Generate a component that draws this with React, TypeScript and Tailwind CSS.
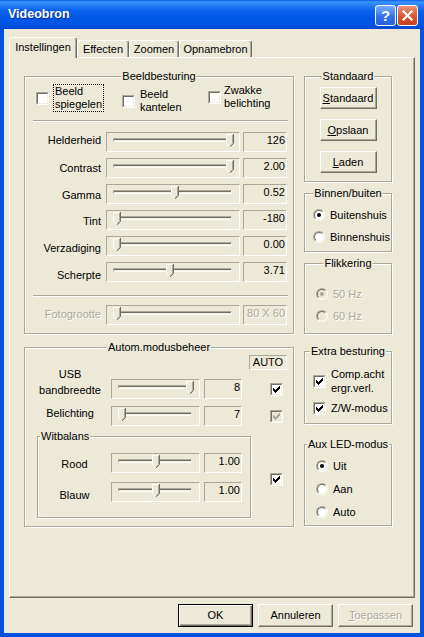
import type { ReactNode } from "react";

// classic 3D colours on the XP beige face
const dis = "text-[#ACA899] [text-shadow:1px_1px_0_#fff]";

const CHECK = [
  [6, 0, 1],
  [5, 1, 2],
  [0, 2, 1],
  [4, 2, 3],
  [0, 3, 2],
  [3, 3, 3],
  [0, 4, 5],
  [1, 5, 3],
  [2, 6, 1],
];

function Check({ checked = false, disabled = false }: { checked?: boolean; disabled?: boolean }) {
  return (
    <span className="flex w-[13px] h-[13px] shrink-0 border border-t-[#ACA899] border-l-[#ACA899] border-r-white border-b-white">
      <span
        className={`flex w-full h-full items-center justify-center border border-t-[#716F64] border-l-[#716F64] border-r-[#F1EFE2] border-b-[#F1EFE2] ${
          disabled ? "bg-[#ECE9D8]" : "bg-white"
        }`}
      >
        {checked && (
          <svg width="7" height="7" viewBox="0 0 7 7" shapeRendering="crispEdges">
            {CHECK.map(([x, y, w]) => (
              <rect key={`${x}-${y}`} x={x} y={y} width={w} height={1} fill={disabled ? "#ACA899" : "#000"} />
            ))}
          </svg>
        )}
      </span>
    </span>
  );
}

function Radio({ checked = false, disabled = false }: { checked?: boolean; disabled?: boolean }) {
  return (
    <span className="flex w-[12px] h-[12px] shrink-0 rounded-full border border-t-[#ACA899] border-l-[#ACA899] border-r-white border-b-white">
      <span
        className={`flex w-full h-full items-center justify-center rounded-full border border-t-[#716F64] border-l-[#716F64] border-r-[#F1EFE2] border-b-[#F1EFE2] ${
          disabled ? "bg-[#ECE9D8]" : "bg-white"
        }`}
      >
        {checked && <span className={`w-[4px] h-[4px] rounded-full ${disabled ? "bg-[#ACA899]" : "bg-black"}`} />}
      </span>
    </span>
  );
}

function GroupBox({
  title,
  left = false,
  className = "",
  children,
}: {
  title: string;
  left?: boolean;
  className?: string;
  children?: ReactNode;
}) {
  return (
    <div className={`relative shrink-0 border border-[#ACA899] shadow-[inset_1px_1px_0_#fff,1px_1px_0_#fff] ${className}`}>
      <span
        className={`absolute -top-[8px] whitespace-nowrap bg-[#ECE9D8] px-[1px] leading-[14px] ${
          left ? "left-[2px]" : "left-1/2 -translate-x-1/2"
        }`}
      >
        {title}
      </span>
      {children}
    </div>
  );
}

function Separator({ className = "" }: { className?: string }) {
  return <div className={`h-[2px] border-t border-t-[#ACA899] border-b border-b-white ${className}`} />;
}

function Thumb() {
  return (
    <svg width="8" height="13" viewBox="0 0 8 13">
      <path d="M0 0H7V9L4 12H3L0 9Z" fill="#ECE9D8" />
      <path d="M0.5 9.5V0.5H6.5" stroke="#fff" fill="none" />
      <path d="M0.5 9.5L3.5 12.5" stroke="#fff" fill="none" />
      <path d="M6.5 1V9.3L3.6 12.2" stroke="#ACA899" fill="none" />
      <path d="M7.5 0V9.5L4.2 12.8" stroke="#716F64" fill="none" />
    </svg>
  );
}

function Slider({ pos, wide = false }: { pos: number; wide?: boolean }) {
  const w = wide ? 134 : 89;
  const left = Math.round(11 + pos * (w - 21) - 4);
  return (
    <div
      className={`relative shrink-0 h-[20px] border border-t-[#ACA899] border-l-[#ACA899] border-r-white border-b-white ${
        wide ? "w-[134px]" : "w-[89px]"
      }`}
    >
      <div className="absolute left-[6px] right-[7px] top-[5px] h-[4px] border border-t-[#ACA899] border-l-[#ACA899] border-r-white border-b-white">
        <div className="h-full border-t border-t-[#716F64] border-b border-b-[#F1EFE2]" />
      </div>
      <div className="absolute top-[1px] flex" style={{ left: left - 1 }}>
        <Thumb />
      </div>
    </div>
  );
}

function Value({ children, className = "", disabled = false }: { children: ReactNode; className?: string; disabled?: boolean }) {
  return (
    <div
      className={`shrink-0 h-[20px] border border-t-[#ACA899] border-l-[#ACA899] border-r-white border-b-white text-right pr-[1px] pt-[1px] leading-[13px] whitespace-nowrap ${
        disabled ? dis : ""
      } ${className}`}
    >
      {children}
    </div>
  );
}

function Btn({
  children,
  className = "",
  isDefault = false,
  disabled = false,
}: {
  children: ReactNode;
  className?: string;
  isDefault?: boolean;
  disabled?: boolean;
}) {
  return (
    <div
      className={`flex shrink-0 items-center justify-center bg-[#ECE9D8] border ${
        isDefault
          ? "border-black shadow-[inset_1px_1px_0_#fff,inset_-1px_-1px_0_#716F64,inset_-2px_-2px_0_#ACA899]"
          : "border-t-white border-l-white border-r-[#716F64] border-b-[#716F64] shadow-[inset_-1px_-1px_0_#ACA899]"
      } ${disabled ? dis : ""} ${className}`}
    >
      {children}
    </div>
  );
}

function Tab({ children, selected = false, className = "" }: { children: ReactNode; selected?: boolean; className?: string }) {
  return (
    <div
      className={`flex shrink-0 items-center justify-center rounded-t-[3px] bg-[#ECE9D8] border-t border-l border-r border-t-white border-l-white border-r-[#716F64] shadow-[inset_-1px_0_0_#ACA899] ${
        selected ? "relative z-10 h-[21px] -mb-[1px] pb-[2px]" : "h-[17px]"
      } ${className}`}
    >
      {children}
    </div>
  );
}

function TitleBar() {
  return (
    <div className="h-[29px] shrink-0 flex items-center pl-[8px] pr-[6px] bg-[linear-gradient(to_bottom,#0A5FE8_0%,#3D95FF_7%,#2A82F7_17%,#0B63EC_35%,#0058E6_60%,#0055E3_85%,#0046D2_100%)]">
      <span className="flex-1 text-white font-bold text-[12.5px] [text-shadow:1px_1px_0_#0B2F8E]">Videobron</span>
      <div className="mt-[2px] flex gap-[1px]">
        <div className="w-[21px] h-[21px] rounded-[3px] border border-white bg-[linear-gradient(to_bottom,#79AEFA,#3471E8_55%,#2A5FDC)] flex items-center justify-center text-white font-bold text-[15px] leading-none">
          ?
        </div>
        <div className="w-[21px] h-[21px] rounded-[3px] border border-white bg-[linear-gradient(to_bottom,#EC9274,#D9552F_55%,#C4411F)] flex items-center justify-center">
          <svg width="11" height="11" viewBox="0 0 11 11">
            <path d="M1.5 1.5L9.5 9.5M9.5 1.5L1.5 9.5" stroke="#fff" strokeWidth="2.2" strokeLinecap="square" />
          </svg>
        </div>
      </div>
    </div>
  );
}

const beeldRows = [
  { label: "Helderheid", value: "126", pos: 1, dy: "pt-[2px]" },
  { label: "Contrast", value: "2.00", pos: 1, dy: "pt-[4px]" },
  { label: "Gamma", value: "0.52", pos: 0.51, dy: "pt-[5px]" },
  { label: "Tint", value: "-180", pos: 0, dy: "pt-[5px]" },
  { label: "Verzadiging", value: "0.00", pos: 0, dy: "pt-[6px]" },
  { label: "Scherpte", value: "3.71", pos: 0.47, dy: "pt-[7px]" },
];

function Beeldbesturing() {
  return (
    <GroupBox title="Beeldbesturing" className="h-[258px]">
      <div className="flex h-[35px] pl-[11px] pt-[7px]">
        <div className="flex w-[86px] items-center self-start">
          <Check />
          <span className="ml-[4px] border border-dotted border-black px-[1px] leading-[13px]">
            Beeld
            <br />
            spiegelen
          </span>
        </div>
        <div className="flex w-[86px] items-center self-start mt-[4px]">
          <Check />
          <span className="ml-[5px] leading-[13px]">
            Beeld
            <br />
            kantelen
          </span>
        </div>
        <div className="flex items-center self-start">
          <Check />
          <span className="ml-[3px] leading-[13px]">
            Zwakke
            <br />
            belichting
          </span>
        </div>
      </div>
      <Separator className="mt-[8px] ml-[8px] mr-[5px]" />
      <div className="mt-[10px] flex flex-col gap-[6px]">
        {beeldRows.map((r) => (
          <div key={r.label} className="flex h-[20px] items-start">
            <div className={`w-[76px] text-right leading-[13px] ${r.dy}`}>{r.label}</div>
            <div className="ml-[5px]">
              <Slider wide pos={r.pos} />
            </div>
            <Value className="ml-[3px] w-[44px]">{r.value}</Value>
          </div>
        ))}
      </div>
      <Separator className="mt-[13px] ml-[8px] mr-[5px]" />
      <div className="mt-[8px] flex h-[20px] items-start">
        <div className={`w-[76px] text-right leading-[13px] pt-[3px] ${dis}`}>Fotogrootte</div>
        <div className="ml-[5px]">
          <Slider wide pos={0} />
        </div>
        <Value disabled className="ml-[3px] w-[44px]">
          80 X 60
        </Value>
      </div>
    </GroupBox>
  );
}

function Automodus() {
  return (
    <GroupBox title="Autom.modusbeheer" className="mt-[13px] h-[180px]">
      <div className="pt-[7px]">
        <div className="ml-[224px] w-[38px] h-[15px] border border-t-[#ACA899] border-l-[#ACA899] border-r-white border-b-white text-center leading-[13px]">
          AUTO
        </div>
      </div>
      <div className="mt-[9px] flex h-[20px] items-center">
        <div className="w-[86px] shrink-0 pl-[4px] text-center leading-[16px] mb-[15px]">
          USB
          <br />
          bandbreedte
        </div>
        <Slider pos={1} />
        <Value className="ml-[4px] w-[38px]">8</Value>
        <div className="ml-[28px]">
          <Check checked />
        </div>
      </div>
      <div className="mt-[7px] flex h-[20px] items-center">
        <div className="w-[86px] shrink-0 pl-[4px] text-center leading-[13px] mb-[6px]">Belichting</div>
        <Slider pos={0} />
        <Value className="ml-[4px] w-[38px]">7</Value>
        <div className="ml-[28px]">
          <Check checked disabled />
        </div>
      </div>
      <div className="mt-[10px] flex items-center">
        <GroupBox title="Witbalans" left className="ml-[12px] w-[214px] h-[82px]">
          <div className="pt-[16px] flex flex-col gap-[9px]">
            <div className="flex h-[20px] items-start">
              <div className="w-[73px] shrink-0 text-center leading-[13px] pt-[5px]">Rood</div>
              <Slider pos={0.5} />
              <Value className="ml-[4px] w-[38px]">1.00</Value>
            </div>
            <div className="flex h-[20px] items-start">
              <div className="w-[73px] shrink-0 text-center leading-[13px] pt-[7px]">Blauw</div>
              <Slider pos={0.5} />
              <Value className="ml-[4px] w-[38px]">1.00</Value>
            </div>
          </div>
        </GroupBox>
        <div className="ml-[19px] mt-[4px]">
          <Check checked />
        </div>
      </div>
    </GroupBox>
  );
}

function RadioRow({ label, checked = false, disabled = false }: { label: string; checked?: boolean; disabled?: boolean }) {
  return (
    <div className="flex h-[16px] items-center">
      <Radio checked={checked} disabled={disabled} />
      <span className={`ml-[5px] ${disabled ? dis : ""}`}>{label}</span>
    </div>
  );
}

function RightColumn() {
  return (
    <div className="flex w-[88px] shrink-0 flex-col">
      <GroupBox title="Standaard" className="h-[106px]">
        <div className="flex flex-col items-center gap-[10px] pt-[10px]">
          <Btn className="w-[57px] h-[22px]">
            <span>
              <u>S</u>tandaard
            </span>
          </Btn>
          <Btn className="w-[57px] h-[22px]">
            <span>
              <u>O</u>pslaan
            </span>
          </Btn>
          <Btn className="w-[57px] h-[22px]">
            <span>
              <u>L</u>aden
            </span>
          </Btn>
        </div>
      </GroupBox>
      <GroupBox title="Binnen/buiten" className="mt-[11px] h-[59px]">
        <div className="flex flex-col gap-[6px] pt-[13px] pl-[8px]">
          <RadioRow label="Buitenshuis" checked />
          <RadioRow label="Binnenshuis" />
        </div>
      </GroupBox>
      <GroupBox title="Flikkering" className="mt-[11px] h-[71px]">
        <div className="flex flex-col gap-[6px] pt-[22px] pl-[11px]">
          <RadioRow label="50 Hz" checked disabled />
          <RadioRow label="60 Hz" disabled />
        </div>
      </GroupBox>
      <GroupBox title="Extra besturing" className="mt-[17px] h-[73px]">
        <div className="pt-[15px] pl-[8px]">
          <div className="flex items-center">
            <Check checked />
            <span className="ml-[5px] leading-[14px]">
              Comp.acht
              <br />
              ergr.verl.
            </span>
          </div>
          <div className="mt-[5px] flex h-[16px] items-center">
            <Check checked />
            <span className="ml-[5px]">Z/W-modus</span>
          </div>
        </div>
      </GroupBox>
      <GroupBox title="Aux LED-modus" className="mt-[20px] h-[82px]">
        <div className="flex flex-col gap-[7px] pt-[13px] pl-[11px]">
          <RadioRow label="Uit" checked />
          <RadioRow label="Aan" />
          <RadioRow label="Auto" />
        </div>
      </GroupBox>
    </div>
  );
}

export default function App() {
  return (
    <div className="w-[424px] h-[637px] flex flex-col overflow-hidden font-['Liberation_Sans',Arial,sans-serif] text-[11px] leading-[13px] text-black select-none">
      <TitleBar />
      <div className="flex-1 flex flex-col bg-[#ECE9D8] border-x-[4px] border-b-[4px] border-[#0453E0]">
        {/* Tabs */}
        <div className="flex h-[28px] items-end pl-[5px] pt-[8px]">
          <Tab selected className="w-[68px]">
            Instellingen
          </Tab>
          <Tab className="w-[52px]">Effecten</Tab>
          <Tab className="w-[50px]">Zoomen</Tab>
          <Tab className="w-[73px]">Opnamebron</Tab>
        </div>

        {/* Tab page */}
        <div className="mx-[5px] h-[541px] flex gap-[10px] pl-[14px] pt-[18px] border border-t-white border-l-white border-r-[#716F64] border-b-[#716F64] shadow-[inset_-1px_-1px_0_#ACA899]">
          <div className="flex w-[270px] shrink-0 flex-col">
            <Beeldbesturing />
            <Automodus />
          </div>
          <RightColumn />
        </div>

        {/* Dialog buttons */}
        <div className="mt-[6px] flex justify-end gap-[5px] pr-[7px]">
          <Btn isDefault className="w-[75px] h-[23px]">
            OK
          </Btn>
          <Btn className="w-[75px] h-[23px]">Annuleren</Btn>
          <Btn disabled className="w-[75px] h-[23px]">
            <span>
              <u>T</u>oepassen
            </span>
          </Btn>
        </div>
      </div>
    </div>
  );
}
